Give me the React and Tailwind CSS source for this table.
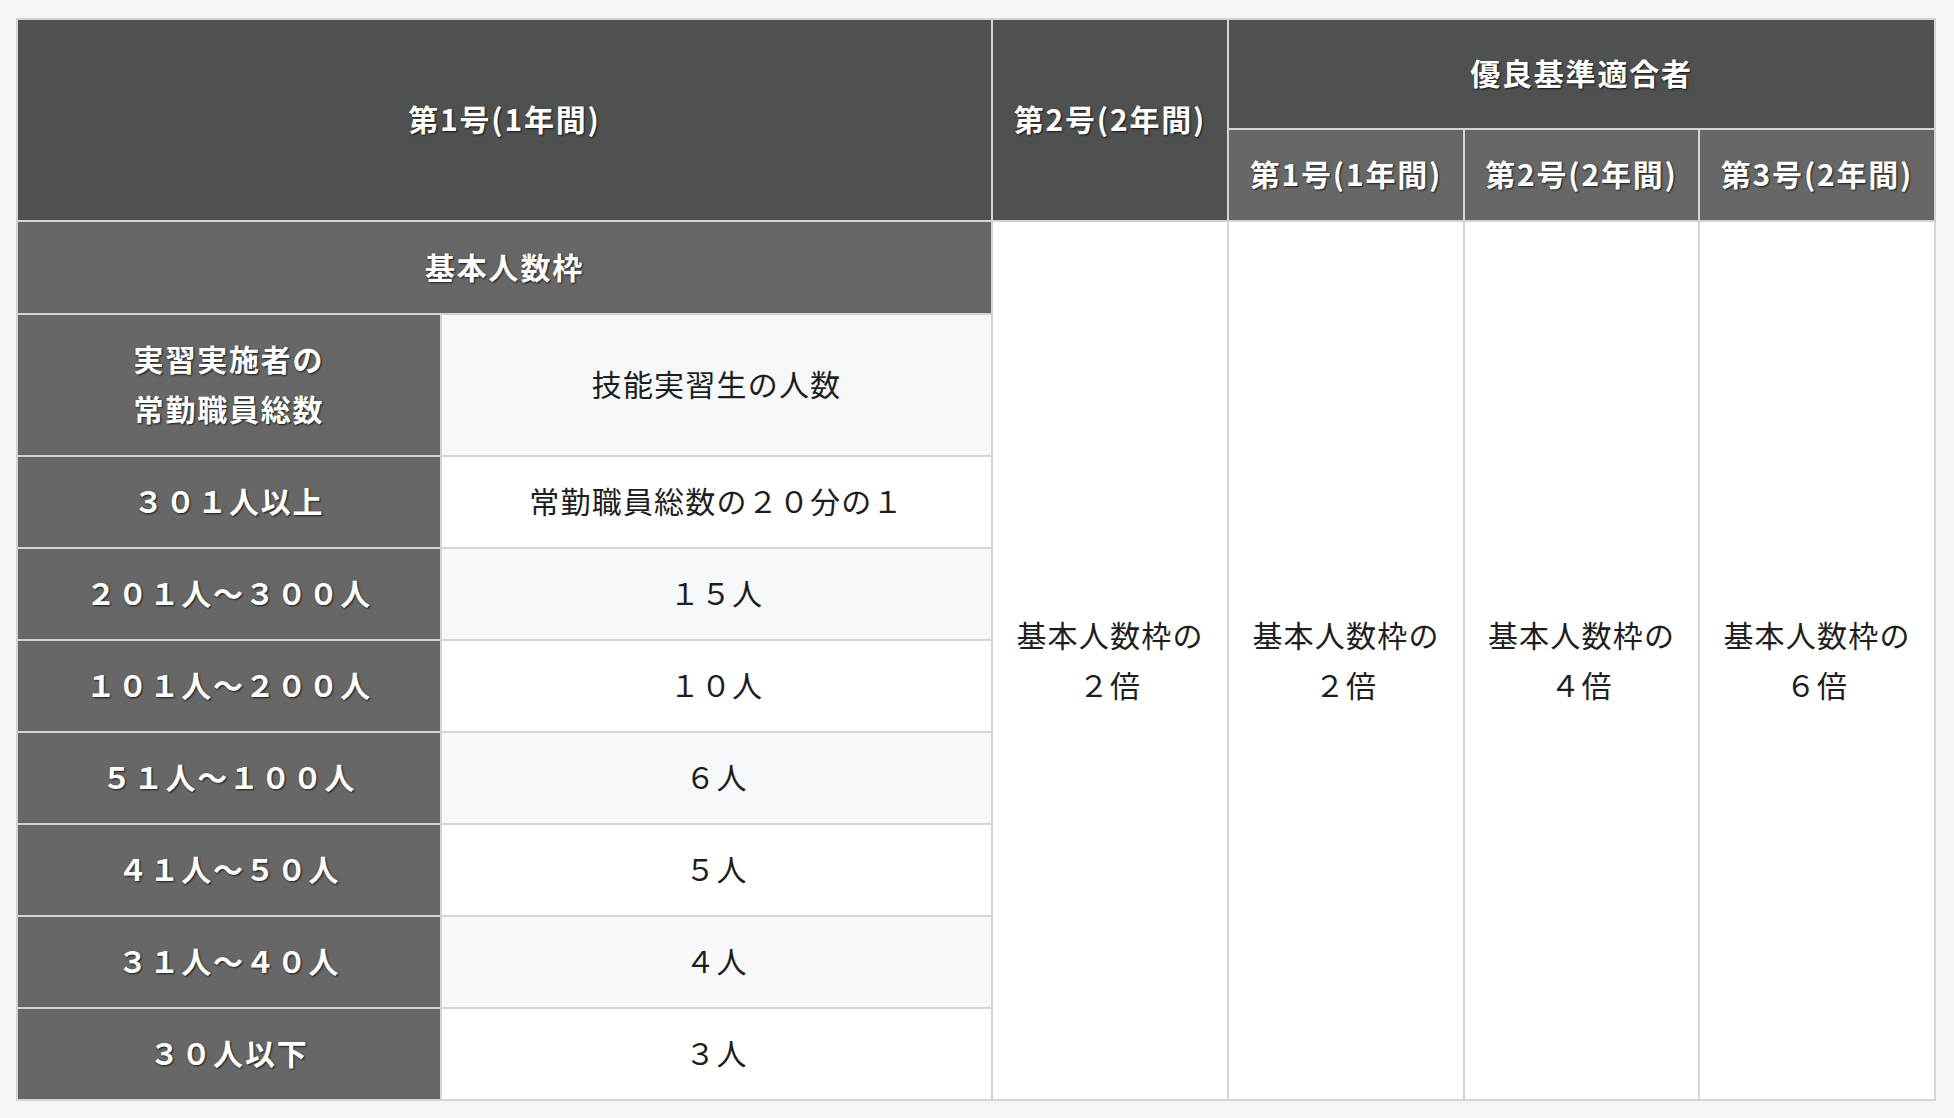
const font = { fontFamily: '"Noto Sans CJK JP", "Noto Sans", sans-serif' };

const rows = [
  { label: "３０１人以上", value: "常勤職員総数の２０分の１" },
  { label: "２０１人〜３００人", value: "１５人" },
  { label: "１０１人〜２００人", value: "１０人" },
  { label: "５１人〜１００人", value: "６人" },
  { label: "４１人〜５０人", value: "５人" },
  { label: "３１人〜４０人", value: "４人" },
  { label: "３０人以下", value: "３人" },
];

const multipliers = ["２", "２", "４", "６"];

const cell = "border-2 border-[#d4d4d4] text-center align-middle p-0 pb-[4px]";
const head =
  " text-white font-bold tracking-[0.06em] [text-shadow:1px_1px_2px_rgba(0,0,0,0.75)]";
const dark = cell + " bg-[#4f5050]" + head;
const mid = cell + " bg-[#666766]" + head;
const body = cell + " text-[#1e1e1e]";

export default function App() {
  return (
    <div
      className="min-h-screen bg-[#f4f5f7] pl-[16px] pt-[18px] text-[30px] tracking-[0.04em] leading-[50px]"
      style={font}
    >
      <table className="table-fixed border-collapse w-[1918px] border-2 border-[#d4d4d4]">
        <colgroup>
          <col className="w-[424px]" />
          <col className="w-[551px]" />
          <col className="w-[236px]" />
          <col className="w-[236px]" />
          <col className="w-[235px]" />
          <col className="w-[236px]" />
        </colgroup>
        <thead>
          <tr className="h-[110px]">
            <th colSpan={2} rowSpan={2} className={dark}>
              第1号(1年間)
            </th>
            <th rowSpan={2} className={dark}>
              第2号(2年間)
            </th>
            <th colSpan={3} className={dark}>
              優良基準適合者
            </th>
          </tr>
          <tr className="h-[92px]">
            <th className={mid}>第1号(1年間)</th>
            <th className={mid}>第2号(2年間)</th>
            <th className={mid}>第3号(2年間)</th>
          </tr>
        </thead>
        <tbody>
          <tr className="h-[93px]">
            <th colSpan={2} className={mid}>
              基本人数枠
            </th>
            {multipliers.map((m, i) => (
              <td key={i} rowSpan={9} className={body + " bg-white"}>
                基本人数枠の
                <br />
                {m}倍
              </td>
            ))}
          </tr>
          <tr className="h-[142px]">
            <th className={mid}>
              実習実施者の
              <br />
              常勤職員総数
            </th>
            <td className={body + " bg-[#f7f8fa]"}>技能実習生の人数</td>
          </tr>
          {rows.map((r, i) => (
            <tr key={r.label} className="h-[92px]">
              <th className={mid}>{r.label}</th>
              <td className={body + (i % 2 === 1 ? " bg-[#f7f8fa]" : " bg-white")}>
                {r.value}
              </td>
            </tr>
          ))}
        </tbody>
      </table>
    </div>
  );
}
